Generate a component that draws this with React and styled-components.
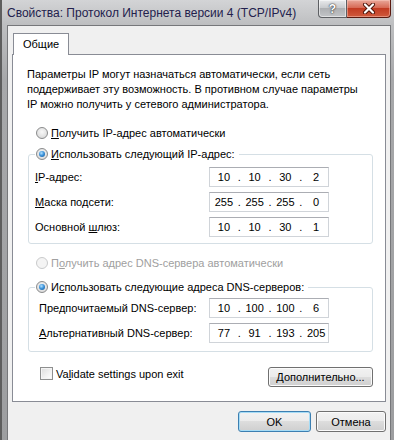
import styled, { createGlobalStyle } from "styled-components";

const GlobalStyle = createGlobalStyle`
  html, body {
    margin: 0;
    padding: 0;
  }
  body {
    font-family: "Liberation Sans", Arial, sans-serif;
    font-size: 11px;
    color: #000;
    background: #fff;
  }
`;

const Window = styled.div`
  width: 394px;
  height: 440px;
  box-sizing: border-box;
  display: flex;
  flex-direction: column;
  padding: 0 3px 0 5px;
  border-left: 2px solid #5e5e5e;
  background: linear-gradient(
    to bottom,
    #d3d4d6 0px,
    #bebfc1 24px,
    #a7a8aa 80px,
    #9d9ea0 100%
  );
  overflow: hidden;
`;

const TitleBar = styled.div`
  height: 25px;
  display: flex;
  align-items: flex-start;
`;

const Title = styled.div`
  line-height: 26px;
  font-size: 12px;
  color: #23214d;
  white-space: nowrap;
`;

const CaptionButtons = styled.div`
  margin-left: auto;
  display: flex;
`;

const HelpButton = styled.div`
  width: 27px;
  height: 17px;
  border: 1px solid #5d5f63;
  border-top: none;
  border-radius: 0 0 0 4px;
  background: linear-gradient(
    to bottom,
    #e9eaec 0%,
    #c9cbce 45%,
    #aeb0b3 50%,
    #c2c4c7 100%
  );
  box-shadow: inset 0 0 0 1px rgba(255, 255, 255, 0.5);
  display: flex;
  align-items: center;
  justify-content: center;
  color: #fff;
  font-weight: bold;
  font-size: 12px;
  text-shadow: 0 0 2px #2a2a2a, 0 0 1px #2a2a2a;
`;

const CloseButton = styled.div`
  width: 43px;
  height: 17px;
  border: 1px solid #5a1a10;
  border-top: none;
  border-left: none;
  border-radius: 0 0 4px 0;
  background: linear-gradient(
    to bottom,
    #e9a89a 0%,
    #d76a55 45%,
    #c23b22 50%,
    #cf5a3d 100%
  );
  box-shadow: inset 0 0 0 1px rgba(255, 210, 200, 0.45);
  display: flex;
  align-items: center;
  justify-content: center;
`;

const Client = styled.div`
  flex: 1;
  display: flex;
  flex-direction: column;
  background: #f0f0f0;
  border: 1px solid #76777a;
  border-bottom: none;
  padding: 7px 4px 0 4px;
`;

const Tab = styled.div`
  align-self: flex-start;
  margin-left: 1px;
  margin-bottom: -1px;
  height: 22px;
  box-sizing: border-box;
  padding: 0 9px;
  line-height: 21px;
  background: #fff;
  border: 1px solid #898c95;
  border-bottom: none;
  position: relative;
  z-index: 1;
`;

const Panel = styled.div`
  background: #fff;
  border: 1px solid #898c95;
  padding: 12px 12px 14px 15px;
  display: flex;
  flex-direction: column;
`;

const Intro = styled.p`
  margin: 0 0 0 -1px;
  line-height: 15px;
`;

const U = styled.span`
  text-decoration: underline;
`;

const Choice = styled.label`
  display: flex;
  align-items: center;
  gap: 3px;
  height: 16px;
  margin-top: ${(p) => p.$gap || 0}px;
  padding-left: ${(p) => p.$indent || 0}px;
  color: ${(p) => (p.$disabled ? "#a0a0a0" : "#000")};
`;

const Radio = styled.span`
  width: 12px;
  height: 12px;
  box-sizing: border-box;
  border-radius: 50%;
  border: 1px solid ${(p) => (p.$disabled ? "#c9cacb" : "#8a8b8c")};
  background: ${(p) =>
    p.$disabled
      ? "#f4f4f4"
      : "radial-gradient(circle at 50% 40%, #f8f8f8 0%, #e2e2e2 60%, #cfcfcf 100%)"};
  display: flex;
  align-items: center;
  justify-content: center;
  flex-shrink: 0;

  &::after {
    content: "";
    display: ${(p) => (p.$checked ? "block" : "none")};
    width: 6px;
    height: 6px;
    border-radius: 50%;
    background: radial-gradient(
      circle at 40% 35%,
      #b4e2ff 0%,
      #3e95dc 45%,
      #124f8e 100%
    );
  }
`;

const Group = styled.fieldset`
  margin: ${(p) => p.$gap || 0}px 0 0;
  padding: ${(p) => p.$top}px 6px ${(p) => p.$bottom}px 6px;
  border: 1px solid #d5dfe5;
  border-radius: 3px;
  min-width: 0;
`;

const Legend = styled.legend`
  padding: 0 4px 0 1px;
  margin: 0;
`;

const Rows = styled.div`
  display: grid;
  grid-template-columns: 174px 120px;
  grid-auto-rows: 20px;
  row-gap: 5px;
  align-items: center;
`;

const FieldLabel = styled.span`
  padding-left: ${(p) => p.$indent || 0}px;
`;

const IpBox = styled.div`
  height: 20px;
  box-sizing: border-box;
  border: 1px solid #d0d4d9;
  border-top-color: #abadb3;
  background: #fff;
  display: flex;
  align-items: center;
  padding-left: 2px;
`;

const Octet = styled.span`
  width: 24px;
  text-align: center;
`;

const Dot = styled.span`
  width: 7px;
  text-align: center;
`;

const Footer = styled.div`
  margin-top: 15px;
  display: flex;
  align-items: flex-start;
  justify-content: space-between;
`;

const CheckRow = styled.label`
  display: flex;
  align-items: center;
  gap: 3px;
  padding-left: 12px;
  height: 13px;
`;

const CheckBox = styled.span`
  width: 13px;
  height: 13px;
  box-sizing: border-box;
  border: 1px solid #8e8f8f;
  background: linear-gradient(135deg, #dcdcdc 0%, #f2f2f2 60%, #fff 100%);
  box-shadow: inset 0 0 0 1px #f4f4f4;
`;

const Button = styled.div`
  width: ${(p) => p.$w}px;
  height: ${(p) => p.$h || 21}px;
  box-sizing: border-box;
  border: 1px solid ${(p) => (p.$default ? "#3c7fb1" : "#707070")};
  border-radius: 3px;
  background: linear-gradient(
    to bottom,
    #f2f2f2 0%,
    #ebebeb 50%,
    #dddddd 50%,
    #cfcfcf 100%
  );
  box-shadow: inset 0 0 0 1px ${(p) => (p.$default ? "#a6dcf6" : "#fbfbfb")};
  display: flex;
  align-items: center;
  justify-content: center;
`;

const ButtonBar = styled.div`
  display: flex;
  justify-content: flex-end;
  gap: 5px;
  padding-top: 9px;
`;

const IpField = ({ value }) => {
  const parts = value.split(".");
  return (
    <IpBox>
      {parts.map((p, i) => (
        <span key={i} style={{ display: "contents" }}>
          <Octet>{p}</Octet>
          {i < parts.length - 1 && <Dot>.</Dot>}
        </span>
      ))}
    </IpBox>
  );
};

const CloseIcon = () => (
  <svg width="14" height="11" viewBox="0 0 14 11">
    <path d="M3 1.5 L11 9.5 M11 1.5 L3 9.5" stroke="#4a1208" strokeWidth="4" strokeLinecap="round" />
    <path d="M3 1.5 L11 9.5 M11 1.5 L3 9.5" stroke="#fff" strokeWidth="2.2" strokeLinecap="round" />
  </svg>
);

const App = () => {
  return (
    <>
      <GlobalStyle />
      <Window>
        <TitleBar>
          <Title>Свойства: Протокол Интернета версии 4 (TCP/IPv4)</Title>
          <CaptionButtons>
            <HelpButton>?</HelpButton>
            <CloseButton>
              <CloseIcon />
            </CloseButton>
          </CaptionButtons>
        </TitleBar>
        <Client>
          <Tab>Общие</Tab>
          <Panel>
            <Intro>
              Параметры IP могут назначаться автоматически, если сеть
              <br />
              поддерживает эту возможность. В противном случае параметры
              <br />
              IP можно получить у сетевого администратора.
            </Intro>

            <Choice $gap={13} $indent={8}>
              <Radio />
              <span>
                <U>П</U>олучить IP-адрес автоматически
              </span>
            </Choice>

            <Group $gap={5} $top={5} $bottom={6}>
              <Legend>
                <Choice>
                  <Radio $checked />
                  <span>
                    <U>И</U>спользовать следующий IP-адрес:
                  </span>
                </Choice>
              </Legend>
              <Rows>
                <FieldLabel>
                  <U>I</U>P-адрес:
                </FieldLabel>
                <IpField value="10.10.30.2" />
                <FieldLabel>
                  <U>М</U>аска подсети:
                </FieldLabel>
                <IpField value="255.255.255.0" />
                <FieldLabel>
                  Основной <U>ш</U>люз:
                </FieldLabel>
                <IpField value="10.10.30.1" />
              </Rows>
            </Group>

            <Choice $gap={11} $indent={8} $disabled>
              <Radio $disabled />
              <span>
                П<U>о</U>лучить адрес DNS-сервера автоматически
              </span>
            </Choice>

            <Group $gap={8} $top={3} $bottom={8}>
              <Legend>
                <Choice>
                  <Radio $checked />
                  <span>
                    И<U>с</U>пользовать следующие адреса DNS-серверов:
                  </span>
                </Choice>
              </Legend>
              <Rows>
                <FieldLabel $indent={4}>
                  Пре<U>д</U>почитаемый DNS-сервер:
                </FieldLabel>
                <IpField value="10.100.100.6" />
                <FieldLabel $indent={4}>
                  <U>А</U>льтернативный DNS-сервер:
                </FieldLabel>
                <IpField value="77.91.193.205" />
              </Rows>
            </Group>

            <Footer>
              <CheckRow>
                <CheckBox />
                <span>
                  Va<U>l</U>idate settings upon exit
                </span>
              </CheckRow>
              <Button $w={105} $h={20}>
                <span>
                  <U>Д</U>ополнительно...
                </span>
              </Button>
            </Footer>
          </Panel>
          <ButtonBar>
            <Button $w={73} $default>
              OK
            </Button>
            <Button $w={70}>Отмена</Button>
          </ButtonBar>
        </Client>
      </Window>
    </>
  );
};

export default App;
